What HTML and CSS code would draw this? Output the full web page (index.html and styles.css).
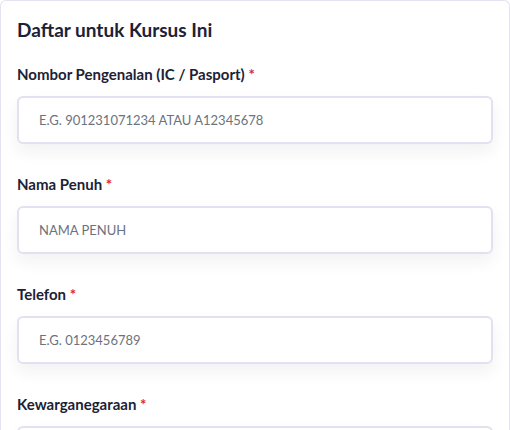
FILE: index.html
```html
<!DOCTYPE html>
<html lang="ms">
<head>
  <meta charset="UTF-8">
  <title>Daftar untuk Kursus Ini</title>
  <meta name="viewport" content="width=device-width, initial-scale=1" />
  <link rel="stylesheet" href="styles.css">
</head>
<body>

  <!-- Borang pendaftaran kursus -->
  <div class="form-card">
    <h2>Daftar untuk Kursus Ini</h2>

    <form id="registerForm">
      <div class="field">
        <label for="icNo">Nombor Pengenalan (IC / Pasport) <span class="req">*</span></label>
        <input type="text" id="icNo" placeholder="E.G. 901231071234 ATAU A12345678" required />
      </div>

      <div class="field">
        <label for="fullName">Nama Penuh <span class="req">*</span></label>
        <input type="text" id="fullName" placeholder="NAMA PENUH" required />
      </div>

      <div class="field">
        <label for="phone">Telefon <span class="req">*</span></label>
        <input type="text" id="phone" placeholder="E.G. 0123456789" required />
      </div>

      <div class="field">
        <label for="citizen">Kewarganegaraan <span class="req">*</span></label>
        <input type="text" id="citizen" required />
      </div>
    </form>
  </div>

</body>
</html>
```

FILE: styles.css
```css
body {
  margin: 0;
  font-family: 'Lato', 'Noto Sans', sans-serif;
  background-color: #ffffff;
  color: #1c2236;
}

.form-card {
  border: 1px solid #e4e3ef;
  border-bottom: none;
  border-radius: 6px 6px 0 0;
  padding: 15px 16px 0 16px;
  height: 430px;
  overflow: hidden;
  box-sizing: border-box;
}

.form-card h2 {
  margin: 0 0 20px 0;
  font-size: 19px;
  line-height: 28px;
  font-weight: 700;
}

.field {
  display: flex;
  flex-direction: column;
  margin-bottom: 30px;
}

.field label {
  font-size: 15px;
  line-height: 20px;
  font-weight: 700;
  margin-bottom: 12px;
}

.req {
  color: #e11d48;
}

.field input {
  height: 48px;
  box-sizing: border-box;
  padding: 0 20px;
  font-family: inherit;
  font-size: 13px;
  color: #1c2236;
  border: 2px solid #e3e1f1;
  border-radius: 6px;
  background: #ffffff;
  box-shadow: 0 8px 16px rgba(30, 30, 60, 0.06);
  outline: none;
}

.field input::placeholder {
  color: #6b7280;
  text-transform: uppercase;
}
```
